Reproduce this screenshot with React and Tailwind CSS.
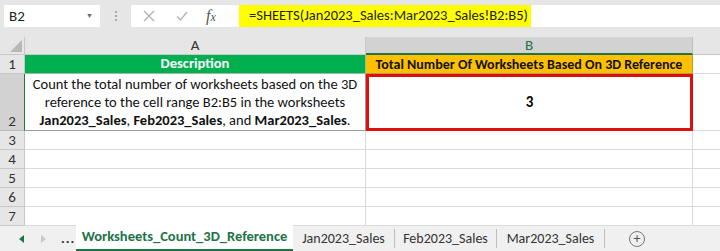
import React from "react";

const font = { fontFamily: "Carlito, Lato, 'Noto Sans', sans-serif" };

const RowHead = ({ n, h, active }) => (
  <div
    className={`w-[25px] shrink-0 flex items-end justify-center border-b border-r ${
      active ? "bg-[#d2d2d2] border-r-[#217346] border-b-[#bdbdbd]" : "bg-[#e6e6e6] border-[#c8c8c8]"
    } text-[15px] text-[#333] ${h}`}
  >
    <span className="leading-[18px]">{n}</span>
  </div>
);

const EmptyRow = ({ n }) => (
  <div className="flex h-[19px]">
    <RowHead n={n} h="h-[19px]" />
    <div className="w-[341px] border-r border-b border-[#dadada] bg-white" />
    <div className="w-[327px] border-r border-b border-[#dadada] bg-white" />
    <div className="flex-1 border-b border-[#dadada] bg-white" />
  </div>
);

export default function App() {
  return (
    <div className="w-[720px] h-[251px] overflow-hidden bg-[#e6e6e6] text-black" style={font}>
      {/* formula bar */}
      <div className="h-[37px] flex items-start pt-[5px] pl-[4px]">
        <div className="w-[96px] h-[22px] bg-white flex items-center justify-between px-[5px] text-[15px] text-[#222]">
          <span>B2</span>
          <span className="text-[7px] text-[#666] pr-[2px]">▼</span>
        </div>
        <div className="w-[31px] h-[22px] flex flex-col items-center justify-center gap-[2px]">
          <span className="w-[2px] h-[2px] bg-[#aaa]" />
          <span className="w-[2px] h-[2px] bg-[#aaa]" />
          <span className="w-[2px] h-[2px] bg-[#aaa]" />
        </div>
        <div className="w-[108px] h-[22px] bg-white flex items-center">
          <svg width="14" height="14" viewBox="0 0 14 14" className="ml-[11px]">
            <path d="M2 2 L12 12 M12 2 L2 12" stroke="#b4b4b4" strokeWidth="1.4" fill="none" />
          </svg>
          <svg width="14" height="14" viewBox="0 0 14 14" className="ml-[19px]">
            <path d="M2 7.5 L5.5 11 L12 3" stroke="#b4b4b4" strokeWidth="1.4" fill="none" />
          </svg>
          <span className="ml-[17px] italic text-[16px] text-[#555]" style={{ fontFamily: "'Liberation Serif', serif" }}>
            f<span className="text-[12px]">x</span>
          </span>
        </div>
        <div className="flex-1 h-[22px] bg-white flex items-center">
          <span className="bg-[#ffff00] h-[22px] flex items-center pl-[10px] pr-[4px] text-[14.5px] text-[#222] w-[292px] whitespace-nowrap">
            =SHEETS(Jan2023_Sales:Mar2023_Sales!B2:B5)
          </span>
        </div>
      </div>

      {/* column headers */}
      <div className="flex h-[18px]">
        <div className="w-[25px] shrink-0 bg-[#e6e6e6] border-r border-b border-[#c8c8c8] relative overflow-hidden">
          <svg width="12" height="12" viewBox="0 0 12 12" className="absolute right-[2px] bottom-[2px]">
            <path d="M12 0 L12 12 L0 12 Z" fill="#b8b8b8" />
          </svg>
        </div>
        <div className="w-[341px] bg-[#e6e6e6] border-r border-b border-[#c8c8c8] flex items-center justify-center text-[15px] text-[#333]">
          A
        </div>
        <div className="w-[327px] bg-[#d2d2d2] border-r border-[#bdbdbd] border-b-2 border-b-[#217346] flex items-center justify-center text-[15px] text-[#217346]">
          B
        </div>
        <div className="flex-1 bg-[#e6e6e6] border-b border-[#c8c8c8]" />
      </div>

      {/* row 1 */}
      <div className="flex h-[19px]">
        <RowHead n="1" h="h-[19px]" />
        <div className="w-[341px] bg-[#00b050] border-r border-b border-[#9bbb9b] flex items-center justify-center text-white font-bold text-[14.5px]">
          Description
        </div>
        <div className="w-[327px] bg-[#ffc000] border-r border-b border-[#b59a40] flex items-center justify-center font-bold text-[14px] text-[#111] whitespace-nowrap">
          Total Number Of Worksheets Based On 3D Reference
        </div>
        <div className="flex-1 bg-white border-b border-[#dadada]" />
      </div>

      {/* row 2 */}
      <div className="flex h-[57px]">
        <RowHead n="2" h="h-[57px]" active />
        <div className="w-[341px] bg-white border-r border-b border-[#9a9a9a] flex flex-col items-center justify-end pb-[1px] text-[14.5px] leading-[18px] text-[#111] whitespace-nowrap">
          <span>Count the total number of worksheets based on the 3D</span>
          <span>reference to the cell range B2:B5 in the worksheets</span>
          <span>
            <b>Jan2023_Sales</b>, <b>Feb2023_Sales</b>, and <b>Mar2023_Sales</b>.
          </span>
        </div>
        <div className="w-[327px] bg-white border-[3px] border-[#e00f0f] flex items-center justify-center font-bold text-[15px]">
          3
        </div>
        <div className="flex-1 bg-white border-b border-[#dadada]" />
      </div>

      <EmptyRow n="3" />
      <EmptyRow n="4" />
      <EmptyRow n="5" />
      <EmptyRow n="6" />
      <EmptyRow n="7" />

      {/* sheet tabs */}
      <div className="flex h-[26px] bg-[#f0f0f0] border-t border-[#c8c8c8] -mt-[1px] items-stretch text-[14px] whitespace-nowrap">
        <div className="w-[76px] flex items-center">
          <span className="ml-[19px] w-0 h-0 border-y-[4px] border-y-transparent border-r-[5px] border-r-[#217346]" />
          <span className="ml-[17px] w-0 h-0 border-y-[4px] border-y-transparent border-l-[5px] border-l-[#c8c8c8]" />
          <span className="ml-[15px] text-[#333] font-bold tracking-[1px] leading-none">...</span>
        </div>
        <div className="w-[217px] bg-white border-b-2 border-[#217346] flex items-center justify-center font-bold text-[#217346] text-[14.5px] -mt-[1px]">
          Worksheets_Count_3D_Reference
        </div>
        <div className="w-[102px] flex items-center justify-center text-[#333] border-r border-[#bdbdbd] my-[3px]">
          Jan2023_Sales
        </div>
        <div className="w-[102px] flex items-center justify-center text-[#333] border-r border-[#bdbdbd] my-[3px]">
          Feb2023_Sales
        </div>
        <div className="w-[108px] flex items-center justify-center text-[#333] border-r border-[#bdbdbd] my-[3px]">
          Mar2023_Sales
        </div>
        <div className="w-[64px] flex items-center justify-center">
          <span className="w-[16px] h-[16px] rounded-full border border-[#777] flex items-center justify-center text-[#555] text-[14px] leading-none">
            +
          </span>
        </div>
      </div>
    </div>
  );
}
